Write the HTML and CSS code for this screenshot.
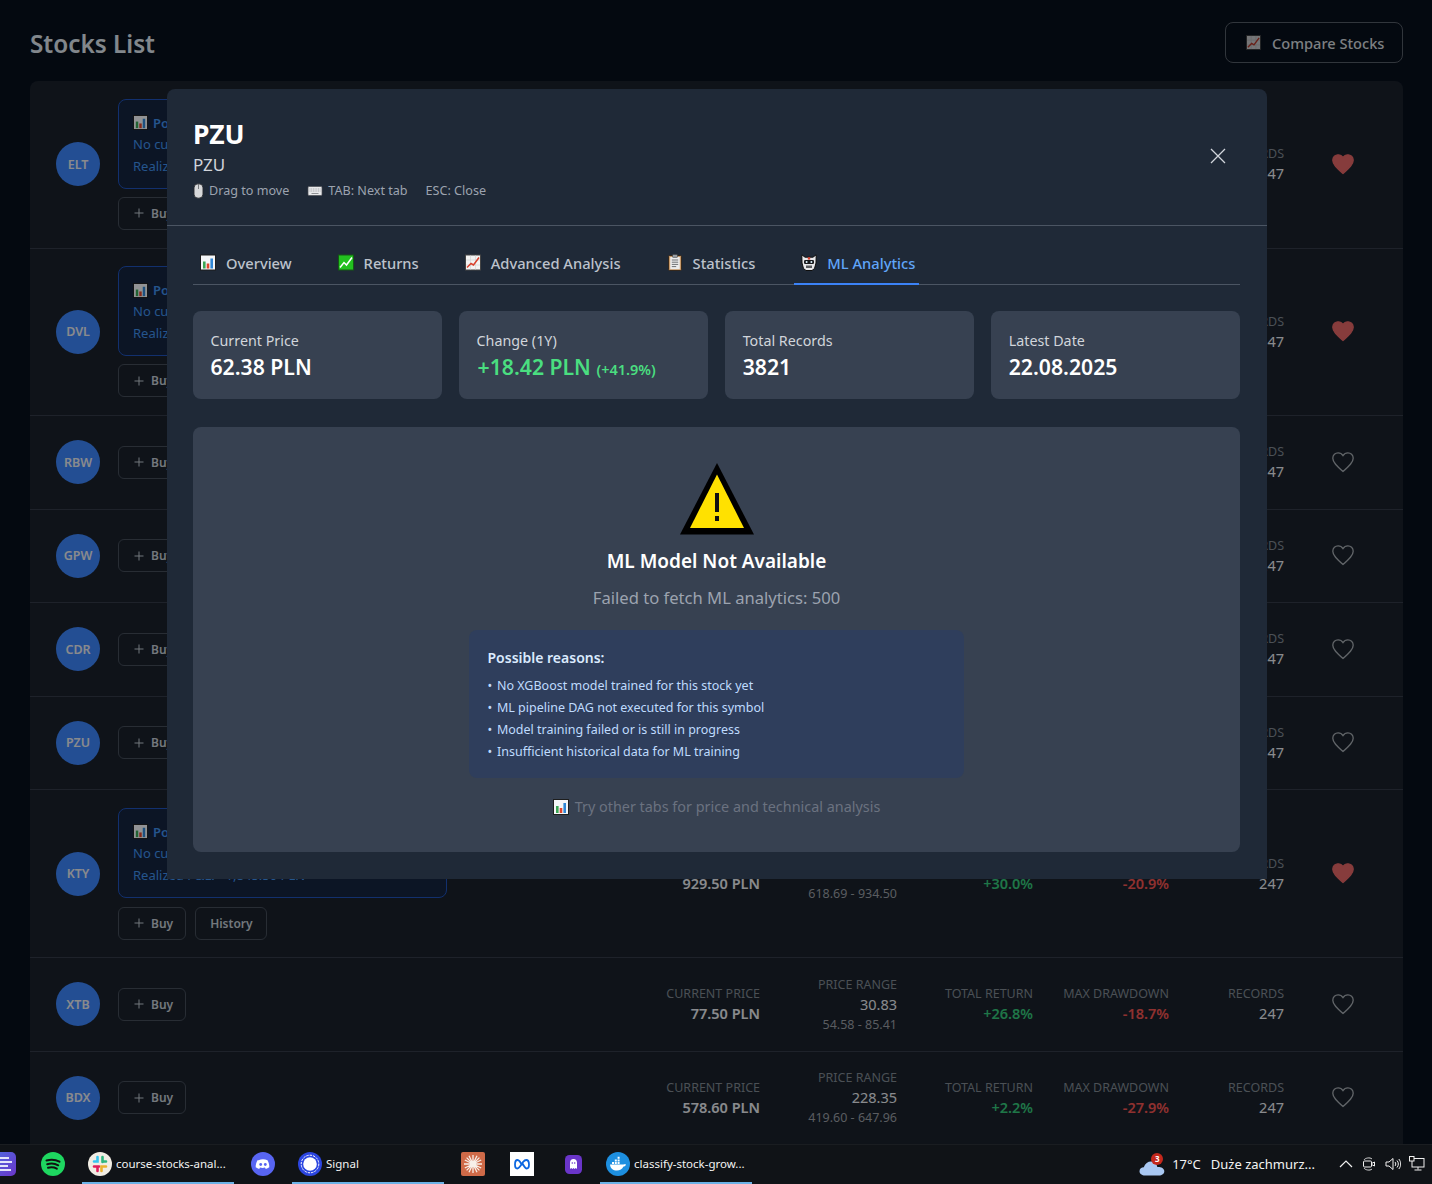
FILE: index.html
```html
<!DOCTYPE html>
<html lang="en">
<head>
<meta charset="utf-8">
<title>Stocks List</title>
<link rel="stylesheet" href="styles.css">
</head>
<body>
<svg class="defs" width="0" height="0" aria-hidden="true">
  <defs>
    <symbol id="i-chart" viewBox="0 0 16 16">
      <rect x=".5" y=".5" width="15" height="15" fill="#f4f6f8" stroke="#1d1d1d"/>
      <rect x="3" y="7" width="2.6" height="7" fill="#3aa655"/>
      <rect x="6.7" y="9" width="2.6" height="5" fill="#e0452c"/>
      <rect x="10.4" y="4" width="2.6" height="10" fill="#2f86d6"/>
    </symbol>
    <symbol id="i-returns" viewBox="0 0 16 16">
      <rect x=".5" y=".5" width="15" height="15" fill="#22c01f" stroke="#145a14"/>
      <path d="M2 13l4-5 2.500 2.500L14 3" fill="none" stroke="#fff" stroke-width="1.500"/>
    </symbol>
    <symbol id="i-trend" viewBox="0 0 16 16">
      <rect x=".5" y=".5" width="15" height="15" fill="#f3f3f3" stroke="#444"/>
      <path d="M5.500 1v14M10.500 1v14M1 5.500h14M1 10.500h14" stroke="#d4d4d4" stroke-width=".7"/>
      <path d="M2 13l4-4 2.500 1.500L14 3" fill="none" stroke="#d8402c" stroke-width="1.500"/>
    </symbol>
    <symbol id="i-clip" viewBox="0 0 16 17">
      <rect x="1.500" y="1.500" width="13" height="15" rx="1.200" fill="#c79a6b" stroke="#2e2116" stroke-width=".9"/>
      <rect x="3.200" y="3" width="9.600" height="12.200" fill="#ececec"/>
      <rect x="5.500" y=".4" width="5" height="3" rx=".6" fill="#9aa0a6" stroke="#333" stroke-width=".5"/>
      <path d="M4.800 6h6.400M4.800 8.200h6.400M4.800 10.400h6.400M4.800 12.600h4.400" stroke="#6f7174"/>
    </symbol>
    <symbol id="i-robot" viewBox="0 0 16 17">
      <path d="M.8.800L4 3.200h8L15.200.800 15 9l-1.500 5.500-2.500 2H5l-2.500-2L1 9z" fill="#e8e8ea" stroke="#0d0d0d"/>
      <rect x="6.800" y="3.200" width="2.400" height="2.400" fill="#d8402c"/>
      <rect x="3" y="6" width="10" height="4" rx="1.200" fill="#17191c"/>
      <circle cx="5.600" cy="8" r="1" fill="#dff3ff"/>
      <circle cx="10.400" cy="8" r="1" fill="#dff3ff"/>
      <rect x="5" y="11.500" width="6" height="2.500" fill="#585a5e"/>
    </symbol>
    <symbol id="i-mouse" viewBox="0 0 11 16">
      <rect x="1" y=".8" width="9" height="14.400" rx="4" fill="#d7d8da" stroke="#26282c" stroke-width=".9"/>
      <path d="M5.500 1v5" stroke="#6d6f73" stroke-width=".9"/>
    </symbol>
    <symbol id="i-keys" viewBox="0 0 16 10">
      <rect x="1" y=".5" width="14" height="9" rx="1" fill="#e8e9eb" stroke="#4c4f55" stroke-width=".7"/>
      <path d="M2.500 3h11M2.500 5h11" stroke="#a5a7ab" stroke-dasharray="1 .7"/>
      <path d="M4.500 7.500h7" stroke="#8f9195"/>
    </symbol>
    <symbol id="i-plus" viewBox="0 0 10 10">
      <path d="M5 .500v9M.500 5h9" fill="none" stroke="currentColor"/>
    </symbol>
    <symbol id="i-heart" viewBox="0 0 24 24">
      <path d="M12 21.400C5.700 16 1.800 12.400 1.800 8.200 1.800 5 4.300 2.800 7.100 2.800c2 0 3.800 1 4.900 2.800 1.100-1.800 2.900-2.800 4.900-2.800 2.800 0 5.300 2.200 5.300 5.400 0 4.200-3.900 7.800-10.200 13.200z"/>
    </symbol>
  </defs>
</svg>

<main class="page">
  <header class="page-head">
    <h1 class="page-title">Stocks List</h1>
    <button class="compare-btn" type="button">
      <svg class="compare-icon"><use href="#i-trend"/></svg>
      <span>Compare Stocks</span>
    </button>
  </header>

  <section class="list">
    <article class="row row-tall">
      <div class="avatar">ELT</div>
      <div class="actions">
        <div class="position">
          <div class="pos-title"><svg class="pos-icon"><use href="#i-chart"/></svg>Position</div>
          <div class="pos-line">No current position</div>
          <div class="pos-line">Realized</div>
        </div>
        <div class="btn-row"><button class="btn" type="button"><svg class="plus"><use href="#i-plus"/></svg>Buy</button></div>
      </div>
      <div class="stats">
        <div class="stat stat-rec"><div class="stat-label">Records</div><div class="stat-plain">247</div></div>
      </div>
      <button class="fav fav-on" type="button" aria-label="Favourite"><svg class="heart"><use href="#i-heart"/></svg></button>
    </article>

    <article class="row row-tall">
      <div class="avatar">DVL</div>
      <div class="actions">
        <div class="position">
          <div class="pos-title"><svg class="pos-icon"><use href="#i-chart"/></svg>Position</div>
          <div class="pos-line">No current position</div>
          <div class="pos-line">Realized</div>
        </div>
        <div class="btn-row"><button class="btn" type="button"><svg class="plus"><use href="#i-plus"/></svg>Buy</button></div>
      </div>
      <div class="stats">
        <div class="stat stat-rec"><div class="stat-label">Records</div><div class="stat-plain">247</div></div>
      </div>
      <button class="fav fav-on" type="button" aria-label="Favourite"><svg class="heart"><use href="#i-heart"/></svg></button>
    </article>

    <article class="row">
      <div class="avatar">RBW</div>
      <div class="actions"><div class="btn-row"><button class="btn" type="button"><svg class="plus"><use href="#i-plus"/></svg>Buy</button></div></div>
      <div class="stats"><div class="stat stat-rec"><div class="stat-label">Records</div><div class="stat-plain">247</div></div></div>
      <button class="fav" type="button" aria-label="Favourite"><svg class="heart"><use href="#i-heart"/></svg></button>
    </article>

    <article class="row">
      <div class="avatar">GPW</div>
      <div class="actions"><div class="btn-row"><button class="btn" type="button"><svg class="plus"><use href="#i-plus"/></svg>Buy</button></div></div>
      <div class="stats"><div class="stat stat-rec"><div class="stat-label">Records</div><div class="stat-plain">247</div></div></div>
      <button class="fav" type="button" aria-label="Favourite"><svg class="heart"><use href="#i-heart"/></svg></button>
    </article>

    <article class="row">
      <div class="avatar">CDR</div>
      <div class="actions"><div class="btn-row"><button class="btn" type="button"><svg class="plus"><use href="#i-plus"/></svg>Buy</button></div></div>
      <div class="stats"><div class="stat stat-rec"><div class="stat-label">Records</div><div class="stat-plain">247</div></div></div>
      <button class="fav" type="button" aria-label="Favourite"><svg class="heart"><use href="#i-heart"/></svg></button>
    </article>

    <article class="row">
      <div class="avatar">PZU</div>
      <div class="actions"><div class="btn-row"><button class="btn" type="button"><svg class="plus"><use href="#i-plus"/></svg>Buy</button></div></div>
      <div class="stats"><div class="stat stat-rec"><div class="stat-label">Records</div><div class="stat-plain">247</div></div></div>
      <button class="fav" type="button" aria-label="Favourite"><svg class="heart"><use href="#i-heart"/></svg></button>
    </article>

    <article class="row row-history">
      <div class="avatar">KTY</div>
      <div class="actions">
        <div class="position">
          <div class="pos-title"><svg class="pos-icon"><use href="#i-chart"/></svg>Position</div>
          <div class="pos-line">No current position</div>
          <div class="pos-line">Realized P&amp;L: +1,845.50 PLN</div>
        </div>
        <div class="btn-row">
          <button class="btn" type="button"><svg class="plus"><use href="#i-plus"/></svg>Buy</button>
          <button class="btn btn-text" type="button">History</button>
        </div>
      </div>
      <div class="stats">
        <div class="stat stat-price"><div class="stat-label">Current Price</div><div class="stat-strong">929.50 PLN</div></div>
        <div class="stat stat-range"><div class="stat-label">Price Range</div><div class="stat-plain">315.81</div><div class="stat-small">618.69 - 934.50</div></div>
        <div class="stat stat-ret"><div class="stat-label">Total Return</div><div class="stat-strong up">+30.0%</div></div>
        <div class="stat stat-dd"><div class="stat-label">Max Drawdown</div><div class="stat-strong down">-20.9%</div></div>
        <div class="stat stat-rec"><div class="stat-label">Records</div><div class="stat-plain">247</div></div>
      </div>
      <button class="fav fav-on" type="button" aria-label="Favourite"><svg class="heart"><use href="#i-heart"/></svg></button>
    </article>

    <article class="row">
      <div class="avatar">XTB</div>
      <div class="actions"><div class="btn-row"><button class="btn" type="button"><svg class="plus"><use href="#i-plus"/></svg>Buy</button></div></div>
      <div class="stats">
        <div class="stat stat-price"><div class="stat-label">Current Price</div><div class="stat-strong">77.50 PLN</div></div>
        <div class="stat stat-range"><div class="stat-label">Price Range</div><div class="stat-plain">30.83</div><div class="stat-small">54.58 - 85.41</div></div>
        <div class="stat stat-ret"><div class="stat-label">Total Return</div><div class="stat-strong up">+26.8%</div></div>
        <div class="stat stat-dd"><div class="stat-label">Max Drawdown</div><div class="stat-strong down">-18.7%</div></div>
        <div class="stat stat-rec"><div class="stat-label">Records</div><div class="stat-plain">247</div></div>
      </div>
      <button class="fav" type="button" aria-label="Favourite"><svg class="heart"><use href="#i-heart"/></svg></button>
    </article>

    <article class="row">
      <div class="avatar">BDX</div>
      <div class="actions"><div class="btn-row"><button class="btn" type="button"><svg class="plus"><use href="#i-plus"/></svg>Buy</button></div></div>
      <div class="stats">
        <div class="stat stat-price"><div class="stat-label">Current Price</div><div class="stat-strong">578.60 PLN</div></div>
        <div class="stat stat-range"><div class="stat-label">Price Range</div><div class="stat-plain">228.35</div><div class="stat-small">419.60 - 647.96</div></div>
        <div class="stat stat-ret"><div class="stat-label">Total Return</div><div class="stat-strong up">+2.2%</div></div>
        <div class="stat stat-dd"><div class="stat-label">Max Drawdown</div><div class="stat-strong down">-27.9%</div></div>
        <div class="stat stat-rec"><div class="stat-label">Records</div><div class="stat-plain">247</div></div>
      </div>
      <button class="fav" type="button" aria-label="Favourite"><svg class="heart"><use href="#i-heart"/></svg></button>
    </article>
  </section>
</main>

<div class="overlay"></div>

<div class="modal" role="dialog" aria-label="PZU">
  <header class="modal-head">
    <div>
      <h2 class="modal-title">PZU</h2>
      <p class="modal-sub">PZU</p>
      <div class="hints">
        <span class="hint"><svg class="hint-mouse"><use href="#i-mouse"/></svg>Drag to move</span>
        <span class="hint"><svg class="hint-keys"><use href="#i-keys"/></svg>TAB: Next tab</span>
        <span class="hint">ESC: Close</span>
      </div>
    </div>
    <button class="close" type="button" aria-label="Close">
      <svg viewBox="0 0 16 16" width="16" height="16"><path d="M1 1l14 14M15 1L1 15" fill="none" stroke="currentColor" stroke-width="1.300"/></svg>
    </button>
  </header>

  <div class="modal-body">
    <nav class="tabs">
      <a class="tab"><svg class="tab-icon"><use href="#i-chart"/></svg>Overview</a>
      <a class="tab"><svg class="tab-icon"><use href="#i-returns"/></svg>Returns</a>
      <a class="tab"><svg class="tab-icon"><use href="#i-trend"/></svg>Advanced Analysis</a>
      <a class="tab"><svg class="tab-icon"><use href="#i-clip"/></svg>Statistics</a>
      <a class="tab tab-active"><svg class="tab-icon"><use href="#i-robot"/></svg>ML Analytics</a>
    </nav>

    <div class="cards">
      <div class="card"><div class="card-label">Current Price</div><div class="card-value">62.38 PLN</div></div>
      <div class="card"><div class="card-label">Change (1Y)</div><div class="card-value green">+18.42 PLN <small class="card-pct">(+41.9%)</small></div></div>
      <div class="card"><div class="card-label">Total Records</div><div class="card-value">3821</div></div>
      <div class="card"><div class="card-label">Latest Date</div><div class="card-value">22.08.2025</div></div>
    </div>

    <section class="ml-panel">
      <svg class="warn" viewBox="0 0 74 72" aria-hidden="true">
        <path d="M37 0L74 71.500H0z" fill="#000"/>
        <path d="M37 11.500L64 65H10z" fill="#ffe100"/>
        <rect x="35" y="30" width="4" height="19" fill="#111"/>
        <rect x="35" y="53" width="4" height="5" fill="#111"/>
      </svg>
      <h3 class="ml-title">ML Model Not Available</h3>
      <p class="ml-error">Failed to fetch ML analytics: 500</p>
      <div class="reasons">
        <div class="reasons-title">Possible reasons:</div>
        <ul class="reasons-list">
          <li><span class="bullet">•</span> No XGBoost model trained for this stock yet</li>
          <li><span class="bullet">•</span> ML pipeline DAG not executed for this symbol</li>
          <li><span class="bullet">•</span> Model training failed or is still in progress</li>
          <li><span class="bullet">•</span> Insufficient historical data for ML training</li>
        </ul>
      </div>
      <p class="ml-tip"><svg class="tip-icon"><use href="#i-chart"/></svg>Try other tabs for price and technical analysis</p>
    </section>
  </div>
</div>

<footer class="taskbar">
  <div class="tb-left">
    <div class="tb-item tb-cut">
      <svg class="tb-icon" viewBox="0 0 24 24"><defs><linearGradient id="g-cut" x1="0" y1="0" x2="1" y2="1"><stop offset="0" stop-color="#4f6be0"/><stop offset="1" stop-color="#6a35c9"/></linearGradient></defs><rect x="-8" y="0" width="24" height="24" rx="5" fill="url(#g-cut)"/><path d="M0 6h9M0 10h12M0 14h8M0 18h11" stroke="#e3e4fa" stroke-width="2"/></svg>
    </div>
    <div class="tb-item tb-spotify">
      <svg class="tb-icon" viewBox="0 0 24 24"><circle cx="12" cy="12" r="12" fill="#1ed760"/><path d="M5.500 8.500c4.500-1.300 9-1 13 1.200M6.200 12.200c3.800-1 7.800-.7 11 1.100M7 15.800c3.200-.8 6.200-.5 8.800.9" fill="none" stroke="#111" stroke-width="2" stroke-linecap="round"/></svg>
    </div>
    <div class="tb-item tb-open tb-slack">
      <svg class="tb-icon" viewBox="0 0 24 24"><circle cx="12" cy="12" r="12" fill="#f1ede4"/><path d="M9.500 5v4.500H6" fill="none" stroke="#36c5f0" stroke-width="2.600" stroke-linecap="round"/><path d="M14.500 5v5M18 9.500h-3" fill="none" stroke="#2eb67d" stroke-width="2.600" stroke-linecap="round"/><path d="M6 14.500h5M9.500 14.500V19" fill="none" stroke="#e01e5a" stroke-width="2.600" stroke-linecap="round"/><path d="M18 14.500h-4.500V19" fill="none" stroke="#ecb22e" stroke-width="2.600" stroke-linecap="round"/></svg>
      <span class="tb-text">course-stocks-anal...</span>
    </div>
    <div class="tb-item tb-discord">
      <svg class="tb-icon" viewBox="0 0 24 24"><circle cx="12" cy="12" r="12" fill="#5865f2"/><path d="M7.500 8.200c3-1.300 6-1.300 9 0 1.300 2.200 1.900 4.600 1.800 7-1.200.9-2.400 1.400-3.500 1.700l-.8-1.300c-1.700.5-3.300.5-5 0l-.8 1.300c-1.100-.3-2.300-.8-3.500-1.700-.1-2.400.5-4.800 1.800-7z" fill="#fff"/><circle cx="9.700" cy="12.500" r="1.400" fill="#5865f2"/><circle cx="14.300" cy="12.500" r="1.400" fill="#5865f2"/></svg>
    </div>
    <div class="tb-item tb-open tb-signal">
      <svg class="tb-icon" viewBox="0 0 24 24"><circle cx="12" cy="12" r="12" fill="#2b45e0"/><circle cx="12" cy="12" r="8.800" fill="none" stroke="#fff" stroke-width="1" stroke-dasharray="2.400 1"/><circle cx="12" cy="12" r="6.800" fill="#fff"/></svg>
      <span class="tb-text">Signal</span>
    </div>
    <div class="tb-item tb-claude">
      <svg class="tb-icon" viewBox="0 0 24 24"><rect width="24" height="24" rx="2" fill="#cf6a48"/><path d="M12 3v18M3 12h18M5.600 5.600l12.800 12.800M18.400 5.600L5.600 18.400M8 3.800l8 16.400M16 3.800L8 20.200M3.800 8l16.400 8M20.200 8L3.800 16" stroke="#f7efe9" stroke-width="1.300"/></svg>
    </div>
    <div class="tb-item tb-meta">
      <svg class="tb-icon" viewBox="0 0 24 24"><rect width="24" height="24" fill="#fff"/><path d="M12 13.500C10.500 10 9 8 7.500 8 5.800 8 5 10 5 12.500 5 15 5.800 16.500 7.300 16.500 9 16.500 10.500 14 13 10c1.300-1.500 2.200-2 3.200-2 1.800 0 2.800 2 2.800 4.500 0 2.500-.8 4-2.300 4-1.700 0-3-3-4.700-6" fill="none" stroke="#0a66e0" stroke-width="1.800"/></svg>
    </div>
    <div class="tb-item tb-ghost">
      <svg class="tb-icon-small" viewBox="0 0 17 19"><rect width="17" height="19" rx="4.500" fill="#6a35c9"/><path d="M8.500 4C6.300 4 5 5.500 5 7.700V14l1.200-1 1.200 1 1.100-1 1.100 1 1.200-1 1.200 1V7.700C12 5.500 10.700 4 8.500 4z" fill="#fff"/><circle cx="7.300" cy="8" r=".8" fill="#6a35c9"/><circle cx="9.700" cy="8" r=".8" fill="#6a35c9"/></svg>
    </div>
    <div class="tb-item tb-open tb-docker">
      <svg class="tb-icon" viewBox="0 0 24 24"><circle cx="12" cy="12" r="12" fill="#1d8fe0"/><path d="M4 12.500h13.500c.8-.4 1.800-.4 2.500 0-.5 1.500-1.500 2-2.500 2-1.300 2.700-3.700 4-6.500 4-4 0-6.500-2-7-6z" fill="#fff"/><path d="M6 10h2v2H6zM8.800 10h2v2h-2zM11.600 10h2v2h-2zM8.800 7.400h2v2h-2zM11.600 7.400h2v2h-2zM11.600 4.800h2v2h-2z" fill="#fff"/></svg>
      <span class="tb-text">classify-stock-grow...</span>
    </div>
  </div>
  <div class="tb-right">
    <div class="weather">
      <svg class="cloud" viewBox="0 0 26 18"><path d="M6 17.500c-3 0-5.500-1.500-5.500-4.200 0-2.400 2-4 4.300-4C6 5.500 9 3.500 12 3.500c3.500 0 6 2.500 6.300 5.500 3.500-.2 7 1.200 7 4.300 0 2.700-2.400 4.200-5.300 4.200z" fill="#a9c8f2"/></svg>
      <span class="badge">3</span>
      <span class="tb-text">17°C</span>
      <span class="tb-text">Duże zachmurz...</span>
    </div>
    <svg class="tray tray-chev" viewBox="0 0 14 8"><path d="M1 7l6-6 6 6" fill="none" stroke="#f0f0f0" stroke-width="1.200"/></svg>
    <svg class="tray" viewBox="0 0 16 16"><path d="M3 4c1-2 6-3 8-1M3 12c1 2 6 3 8 1" fill="none" stroke="#d8d8d8"/><rect x="2.500" y="5" width="8" height="6" rx="1" fill="none" stroke="#f0f0f0"/><path d="M10.500 7.500l3-1.500v4l-3-1.500" fill="none" stroke="#f0f0f0"/></svg>
    <svg class="tray" viewBox="0 0 16 16"><path d="M1 6h3l4-3.500v11L4 10H1z" fill="none" stroke="#f0f0f0"/><path d="M10 6c1 1 1 3 0 4M12 4.500c1.800 2 1.800 5 0 7M13.800 3c2.500 3 2.500 7 0 10" fill="none" stroke="#f0f0f0"/></svg>
    <svg class="tray" viewBox="0 0 16 16"><rect x="3" y="2.500" width="12" height="8.500" fill="none" stroke="#f0f0f0"/><rect x=".5" y=".5" width="4.500" height="4.500" fill="#111" stroke="#f0f0f0"/><path d="M9 11v2.500M5.500 14h7" stroke="#f0f0f0"/></svg>
  </div>
</footer>
</body>
</html>
```
FILE: styles.css
```css
* { box-sizing: border-box; }
html, body { margin: 0; padding: 0; }
body {
  width: 1432px;
  height: 1184px;
  overflow: hidden;
  background: #080f1c;
  color: #f3f4f6;
  font-family: "Noto Sans", "Open Sans", "Liberation Sans", sans-serif;
  position: relative;
}
.defs { position: absolute; }
button { font-family: inherit; cursor: pointer; }
svg { display: block; flex: none; }

.page { padding: 22px 29px 0 30px; height: 1144px; overflow: hidden; }
.page-head { display: flex; align-items: center; justify-content: space-between; height: 41px; margin-bottom: 18px; }
.page-title { margin: 0; padding-top: 2px; font-size: 24.300px; font-weight: 600; color: #d9e1e9; }
.compare-btn {
  display: flex; align-items: center; gap: 11px;
  height: 41px; width: 178px; padding: 0 18px 0 20px;
  background: transparent; border: 1px solid #535b64; border-radius: 8px;
  color: #d0d5d9; font-size: 14.600px; font-weight: 500; white-space: nowrap;
}
.compare-icon { width: 15px; height: 15px; opacity: .8; }

.list { background: #19212b; border-radius: 8px 8px 0 0; }
.row {
  display: flex; align-items: center;
  padding: 0 26px; height: 93.500px;
  border-bottom: 1px solid #323a46;
}
.row-tall { height: 167.500px; }
.row-history { height: 168px; }
.avatar {
  width: 44px; height: 44px; border-radius: 50%; flex: none;
  display: flex; align-items: center; justify-content: center;
  background: #3b82f6;
  color: #e5e7eb; font-size: 12.500px; font-weight: 600;
}
.actions { margin-left: 18px; width: 329px; flex: none; }
.position {
  height: 90px; padding: 13px 14px 0; margin-bottom: 8px;
  background: #14233e; border: 1px solid #1e50b7; border-radius: 8px;
  color: #3f8ee9; font-size: 13px;
}
.row-history .position { margin-bottom: 9px; }
.pos-title { display: flex; align-items: center; gap: 5px; height: 20px; font-weight: 600; }
.pos-icon { width: 15px; height: 15px; }
.pos-line { height: 22px; line-height: 22px; white-space: nowrap; }
.btn-row { display: flex; gap: 9px; }
.btn {
  display: inline-flex; align-items: center; gap: 7px;
  height: 33px; padding: 0 12px 0 15px;
  background: transparent; border: 1px solid #434b57; border-radius: 6px;
  color: #c0c8d0; font-size: 12px; font-weight: 600;
}
.btn-text { padding: 0 13px 0 14px; }
.plus { width: 10px; height: 10px; color: #c0c8d0; }

.stats { margin-left: auto; padding-top: 2px; display: flex; align-items: center; }
.stat { text-align: right; flex: none; }
.stat-price { width: 120px; }
.stat-range { width: 137px; }
.stat-ret { width: 136px; }
.stat-dd { width: 136px; }
.stat-rec { width: 115px; }
.stat-label { font-size: 12.500px; line-height: 16px; color: #7d858e; text-transform: uppercase; white-space: nowrap; }
.stat-strong { font-size: 14.500px; line-height: 22px; font-weight: 600; color: #e5e7eb; white-space: nowrap; }
.stat-plain { font-size: 14.500px; line-height: 22px; color: #e5e7eb; white-space: nowrap; }
.stat-small { font-size: 12.500px; line-height: 19px; color: #969aa0; white-space: nowrap; }
.up { color: #34c578; }
.down { color: #ef5350; }
.fav { margin-left: 25px; width: 68px; padding: 0; display: flex; justify-content: center; background: none; border: 0; }
.heart { width: 24px; height: 24px; fill: none; stroke: #a3a8ae; stroke-width: 1.300; margin-top: -1px; }
.fav-on .heart { fill: #e06464; stroke: #e06464; }

.overlay { position: absolute; left: 0; top: 0; right: 0; height: 1144px; background: rgba(0, 0, 0, .4); }

.modal {
  position: absolute; left: 167px; top: 89px; width: 1100px; height: 790px;
  background: #1f2937; border-radius: 8px 8px 0 0;
}
.modal-head {
  display: flex; justify-content: space-between; align-items: flex-start;
  height: 137px; padding: 27px 41px 0 26px; border-bottom: 1px solid #4b5563;
}
.modal-title { margin: 0; font-size: 26.500px; line-height: 36px; font-weight: 700; color: #fff; }
.modal-sub { margin: 0; font-size: 17px; line-height: 25px; color: #d1d5db; }
.hints { display: flex; gap: 18px; margin-top: 4px; font-size: 12.600px; line-height: 20px; color: #9ca3af; }
.hint { display: inline-flex; align-items: center; gap: 5px; white-space: nowrap; }
.hint-mouse { width: 11px; height: 16px; }
.hint-keys { width: 16px; height: 10px; }
.close { margin-top: 32px; padding: 0; background: none; border: 0; color: #d1d5db; }

.modal-body { padding: 20px 27px 0 26px; }
.tabs { display: flex; gap: 8px; height: 39px; border-bottom: 1px solid #4b5563; }
.tab {
  display: flex; align-items: center; gap: 10px; height: 39px; padding: 0 31px 4px 7px;
  border-bottom: 2px solid transparent;
  color: #bcc2cc; font-size: 14.700px; font-weight: 500; white-space: nowrap;
}
.tab-icon { width: 16px; height: 17px; }
.tab-active { color: #60a5fa; border-bottom-color: #3b82f6; padding-right: 4px; }

.cards { display: grid; grid-template-columns: repeat(4, 1fr); gap: 17.300px; margin-top: 26px; }
.card { height: 88px; padding: 19px 17.500px; background: #374151; border-radius: 8px; }
.card-label { font-size: 14.300px; line-height: 21px; color: #d1d5db; }
.card-value { font-size: 21.200px; line-height: 31px; font-weight: 600; color: #fff; white-space: nowrap; }
.card-value.green { color: #4ade80; padding-left: 1px; }
.card-pct { font-size: 14.500px; font-weight: 600; }

.ml-panel {
  height: 425px; margin-top: 28px; padding-top: 36px;
  background: #374151; border-radius: 8px;
  display: flex; flex-direction: column; align-items: center;
}
.warn { width: 74px; height: 72px; }
.ml-title { margin: 13px 0 0; font-size: 19px; line-height: 26px; font-weight: 600; color: #fff; }
.ml-error { margin: 12px 0 0; font-size: 16.600px; line-height: 24px; color: #9ca3af; }
.reasons {
  width: 495px; height: 148px; margin-top: 20px; padding: 18px 18.500px;
  background: #2f3e5c; border-radius: 8px; color: #bfdbfe;
}
.reasons-title { font-size: 14px; line-height: 20px; font-weight: 600; color: #dbeafe; margin-bottom: 7px; }
.reasons-list { margin: 0; padding: 0; list-style: none; font-size: 12.500px; line-height: 22px; }
.bullet { margin-right: 1.500px; }
.ml-tip { display: flex; align-items: center; gap: 6px; margin: 19px 0 0; font-size: 14.400px; line-height: 20px; color: #6b7280; }
.tip-icon { width: 16px; height: 16px; }

.taskbar {
  position: relative; height: 40px;
  display: flex; justify-content: space-between;
  background: #101317; border-top: 1px solid #1a1d21;
  color: #f3f3f3; font-size: 11.500px;
}
.tb-left, .tb-right { display: flex; align-items: center; height: 39px; }
.tb-item { display: flex; align-items: center; height: 39px; flex: none; padding-bottom: 1px; }
.tb-icon { width: 24px; height: 24px; }
.tb-icon-small { width: 17px; height: 19px; }
.tb-open { border-bottom: 2px solid #6cb2e6; gap: 4px; padding: 0 0 0 6px; }
.tb-text { white-space: nowrap; }
.tb-cut { width: 16px; overflow: hidden; }
.tb-spotify { margin-left: 25px; }
.tb-slack { width: 152px; margin-left: 17px; }
.tb-discord { margin-left: 17px; }
.tb-signal { width: 152px; margin-left: 17px; }
.tb-claude { margin-left: 17px; }
.tb-meta { margin-left: 25px; }
.tb-ghost { margin-left: 31px; }
.tb-docker { width: 152px; margin-left: 18px; }
.tb-right { padding: 0 7px 1px 0; gap: 8px; }
.weather { position: relative; display: flex; align-items: center; gap: 10px; margin-right: 16px; font-size: 13px; }
.cloud { width: 26px; height: 18px; margin-top: 6px; margin-right: -3px; }
.badge {
  position: absolute; left: 12px; top: 1px;
  width: 12px; height: 12px; border-radius: 50%;
  background: #c4281c; color: #fff; font-size: 8px; line-height: 12px; text-align: center; font-weight: 700;
}
.tray { width: 16px; height: 16px; }
.tray-chev { width: 14px; height: 8px; }
```
